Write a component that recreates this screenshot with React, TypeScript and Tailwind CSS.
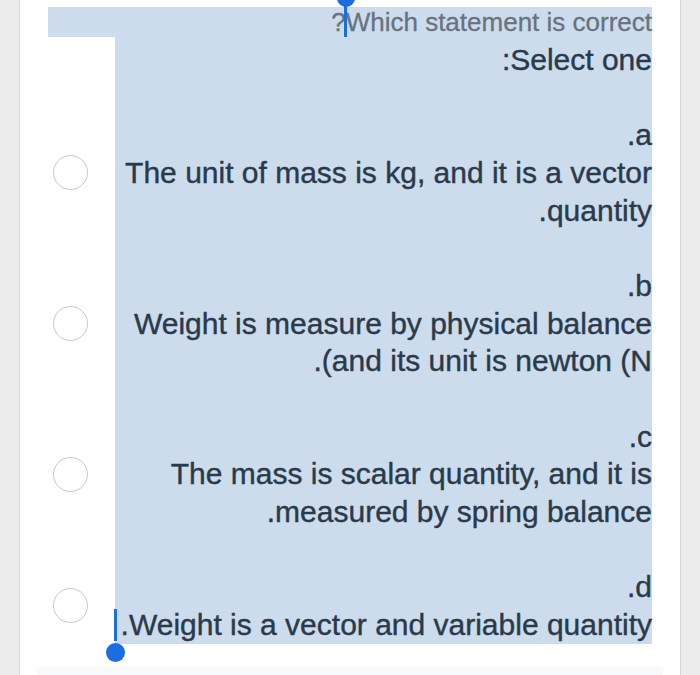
import React from 'react';

const font = { fontFamily: '"Liberation Sans", Arial, sans-serif' };

function Radio() {
  return (
    <div className="w-[67px] shrink-0 flex items-center">
      <div className="ml-[5px] w-[35px] h-[35px] rounded-full border-[1.5px] border-[#c8c8c8] bg-white"></div>
    </div>
  );
}

function Spacer() {
  return (
    <div className="flex">
      <div className="w-[67px] shrink-0"></div>
      <div className="flex-1 h-[37.66px] bg-[#cddcec]"></div>
    </div>
  );
}

function Option({ label, lines, caret }: { label: string; lines: string[]; caret?: boolean }) {
  return (
    <div className="flex items-stretch">
      <Radio />
      <div className="relative flex-1 bg-[#cddcec] text-right">
        <div>{label}</div>
        {lines.map((l, i) => (
          <div key={i}>{l}</div>
        ))}
        {caret && (
          <>
            <span className="absolute left-[-1.5px] bottom-[3px] w-[3px] h-[32px] bg-[#1b6de0]"></span>
            <span className="absolute left-[-9.5px] bottom-[-18px] w-[19px] h-[19px] rounded-full bg-[#1b6de0]"></span>
          </>
        )}
      </div>
    </div>
  );
}

export default function App() {
  return (
    <div className="w-[700px] h-[675px] bg-[#ececec] overflow-hidden" style={font}>
      <div className="ml-[19px] w-[662px] h-full border-x border-[#d6d6d6] bg-white px-[28px] pt-[7px]">
        {/* question line */}
        <div className="h-[30px] bg-[#cddcec] text-right text-[26px] leading-[30px] text-[#67737f] [-webkit-text-stroke:0.3px_#67737f]">
          ?<span className="relative inline-block w-0 h-[30px] align-top">
            <span className="absolute left-[-1.5px] top-[-7px] w-[3px] h-[37px] bg-[#1b6de0]"></span>
            <span className="absolute left-[-9px] top-[-18px] w-[18px] h-[18px] rounded-full bg-[#1b6de0]"></span>
          </span>Which statement is correct
        </div>

        <div className="text-[30px] leading-[37.66px] text-[#2a3a4b] [-webkit-text-stroke:0.4px_#2a3a4b]">
          <div className="flex">
            <div className="w-[67px] shrink-0"></div>
            <div className="flex-1 bg-[#cddcec] text-right pt-[4px]">:Select one</div>
          </div>
          <Spacer />
          <Option label=".a" lines={['The unit of mass is kg, and it is a vector', '.quantity']} />
          <Spacer />
          <Option label=".b" lines={['Weight is measure by physical balance', '.(and its unit is newton (N']} />
          <Spacer />
          <Option label=".c" lines={['The mass is scalar quantity, and it is', '.measured by spring balance']} />
          <Spacer />
          <Option label=".d" lines={['.Weight is a vector and variable quantity']} caret />
        </div>

        <div className="mt-[23px] -mx-[11px] h-[10px] bg-[#f8f9fa]"></div>
      </div>
    </div>
  );
}
